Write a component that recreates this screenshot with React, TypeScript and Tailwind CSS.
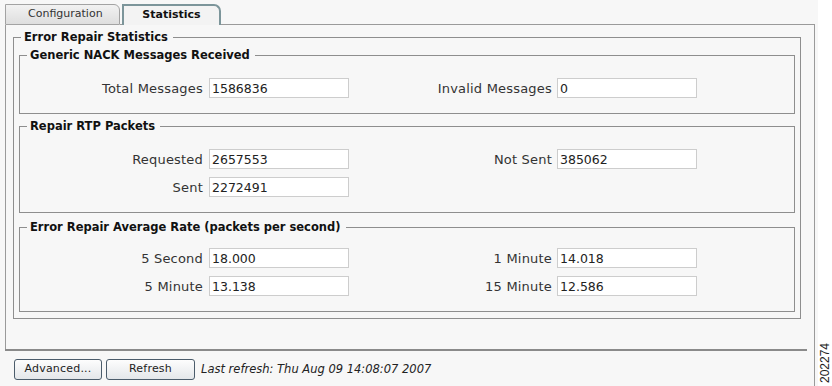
import type { ReactNode } from 'react';

const font = "font-['DejaVu_Sans','Verdana',sans-serif]";

function Field({ label, value, right }: { label: string; value: string; right?: boolean }) {
  return (
    <div className={`flex items-center justify-end ${right ? 'gap-[5px]' : 'gap-[6px]'}`}>
      <span className="text-[13px] tracking-[0.2px] text-[#333] leading-none whitespace-nowrap">{label}</span>
      <input
        readOnly
        value={value}
        className={`w-[140px] h-[20px] bg-white border border-[#cdcdcd] px-[2px] text-[12.5px] text-[#222] outline-none ${font}`}
      />
    </div>
  );
}

function Group({
  title,
  className,
  legendClass = 'ml-[7px]',
  children,
}: {
  title: string;
  className: string;
  legendClass?: string;
  children: ReactNode;
}) {
  return (
    <fieldset className={`border border-[#8e8e8e] ${className}`}>
      <legend className={`${legendClass} px-[3px] pr-[5px] text-[11.5px] leading-[14px] font-bold text-[#111]`}>
        {title}
      </legend>
      {children}
    </fieldset>
  );
}

export default function App() {
  return (
    <div className={`w-[832px] h-[386px] flex bg-white ${font}`}>
      <div className="w-[818px] bg-[#f7f7f7] flex flex-col">
        {/* Tabs */}
        <div className="flex items-end h-[25px] pl-[5px] pr-[3px]">
          <div className="w-[115px] h-[21px] border border-[#a3a3a3] rounded-tr-[6px] bg-gradient-to-b from-[#f2f2f2] to-[#dedede] flex items-center pl-[22px] text-[11px] text-[#333]">
            Configuration
          </div>
          <div className="w-[2px] h-full border-b border-[#9a9a9a]" />
          <div className="w-[99px] h-[21px] border-2 border-b-0 border-[#7c959a] rounded-tr-[7px] bg-[#f3f3f3] flex items-center justify-center text-[11px] font-bold text-[#111]">
            Statistics
          </div>
          <div className="flex-1 h-full border-b border-[#9a9a9a]" />
        </div>

        {/* Panel */}
        <div className="flex-1 flex flex-col ml-[5px] mr-[3px] border-r border-[#9a9a9a]">
          <div className="h-[324px] border-l border-[#9a9a9a] pt-[5px] pl-[7px] pr-[13px]">
            <Group title="Error Repair Statistics" className="px-[5px] pb-[6px]" legendClass="ml-[2px]">
              <Group title="Generic NACK Messages Received" className="mt-[4px] pt-[16px] pb-[15px]">
                <div className="grid grid-cols-[329px_348px]">
                  <Field label="Total Messages" value="1586836" />
                  <Field label="Invalid Messages" value="0" right />
                </div>
              </Group>

              <Group title="Repair RTP Packets" className="mt-[5px] pt-[16px] pb-[15px]">
                <div className="grid grid-cols-[329px_348px] gap-y-[8px]">
                  <Field label="Requested" value="2657553" />
                  <Field label="Not Sent" value="385062" right />
                  <Field label="Sent" value="2272491" />
                </div>
              </Group>

              <Group
                title="Error Repair Average Rate (packets per second)"
                className="mt-[7px] pt-[14px] pb-[15px]"
              >
                <div className="grid grid-cols-[329px_348px] gap-y-[8px]">
                  <Field label="5 Second" value="18.000" />
                  <Field label="1 Minute" value="14.018" right />
                  <Field label="5 Minute" value="13.138" />
                  <Field label="15 Minute" value="12.586" right />
                </div>
              </Group>
            </Group>
          </div>

          <div className="h-[2px] w-[802px] bg-[#8a8a8a]" />

          {/* Footer */}
          <div className="flex items-center pl-[9px] pt-[8px]">
            <button className="w-[88px] h-[21px] border border-[#4b5c6b] rounded-[3px] bg-gradient-to-b from-[#fdfdfd] to-[#e4e7ea] text-[11px] tracking-[0.2px] text-[#222]">
              Advanced...
            </button>
            <button className="ml-[4px] w-[89px] h-[21px] border border-[#4b5c6b] rounded-[3px] bg-gradient-to-b from-[#fdfdfd] to-[#e4e7ea] text-[11px] tracking-[0.2px] text-[#222]">
              Refresh
            </button>
            <span className="ml-[6px] text-[11.5px] italic text-[#222] whitespace-nowrap">
              Last refresh: Thu Aug 09 14:08:07 2007
            </span>
          </div>
        </div>
      </div>

      <div className="flex-1 flex flex-col justify-end items-center pb-[3px]">
        <span className="[writing-mode:vertical-rl] rotate-180 font-['Liberation_Sans',Arial,sans-serif] text-[12px] leading-none text-[#222]">
          202274
        </span>
      </div>
    </div>
  );
}
